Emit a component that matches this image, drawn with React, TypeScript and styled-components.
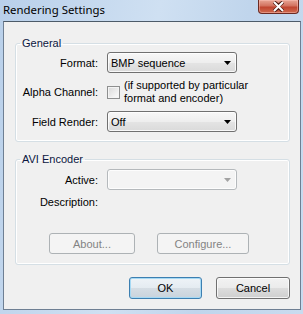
import React from "react";
import styled, { createGlobalStyle } from "styled-components";

const Global = createGlobalStyle`
  html, body { margin: 0; padding: 0; background: #c4d7ec; }
  * { box-sizing: border-box; }
`;

const body = `"Liberation Sans", Arial, sans-serif`;

const Window = styled.div`
  width: 303px;
  height: 314px;
  display: flex;
  flex-direction: column;
  background: linear-gradient(100deg, #b9d0ea 0%, #cfe0f2 45%, #c0d5ec 70%, #c9dbef 100%);
  overflow: hidden;
`;

const TitleBar = styled.div`
  height: 21px;
  flex: none;
  display: flex;
  justify-content: space-between;
  align-items: flex-start;
  padding-left: 3px;
`;

const Title = styled.div`
  font-family: "Noto Sans", sans-serif;
  font-size: 11.4px;
  line-height: 16px;
  margin-top: 2px;
  color: #000;
`;

const CloseButton = styled.div`
  width: 41px;
  height: 14px;
  margin-right: 4px;
  border: 1px solid #6b2a22;
  border-top: none;
  border-radius: 0 0 4px 4px;
  background: linear-gradient(#e8a595 0%, #d2725f 45%, #c04530 55%, #cf6a4e 100%);
  box-shadow: inset 0 0 0 1px rgba(255, 200, 190, 0.45);
  display: flex;
  align-items: center;
  justify-content: center;
`;

const Client = styled.div`
  flex: 1;
  margin: 0 2px 4px 3px;
  border: 1px solid #6e7f93;
  border-top-color: #4d5b69;
  background: #f0f0f0;
  display: flex;
  flex-direction: column;
  padding: 14px 10px 0 11px;
  font-family: ${body};
  font-size: 11px;
  color: #000;
`;

const Group = styled.fieldset<{ $gap?: number }>`
  margin: ${(p) => p.$gap ?? 0}px 0 0 0;
  padding: 0;
  min-width: 0;
  width: 275px;
  border: 1px solid #d5dfe5;
  border-radius: 3px;
  box-shadow: inset 0 0 0 1px #fff;
`;

const Legend = styled.legend`
  margin-left: 4px;
  padding: 0 2px;
  line-height: 14px;
  font-size: 11px;
  color: #0b1640;
`;

const Form = styled.div<{ $pt: number; $pb: number; $rowGap: number }>`
  display: grid;
  grid-template-columns: 82px 1fr;
  column-gap: 9px;
  row-gap: ${(p) => p.$rowGap}px;
  padding: ${(p) => p.$pt}px 0 ${(p) => p.$pb}px 0;
`;

const Label = styled.div`
  text-align: right;
  align-self: center;
  line-height: 14px;
  white-space: nowrap;
`;

const Combo = styled.div<{ $disabled?: boolean }>`
  width: 130px;
  height: 21px;
  border: 1px solid ${(p) => (p.$disabled ? "#b5b9bc" : "#707070")};
  border-radius: 3px;
  background: ${(p) =>
    p.$disabled
      ? "#f4f4f4"
      : "linear-gradient(#f7f7f7 0%, #eeeeee 50%, #e4e4e4 51%, #dadada 100%)"};
  box-shadow: inset 0 0 0 1px rgba(255, 255, 255, 0.8);
  display: flex;
  align-items: center;
  justify-content: space-between;
  padding: 0 5px 0 3px;
  white-space: nowrap;
`;

const CheckRow = styled.div`
  display: flex;
  align-items: center;
  gap: 4px;
  white-space: nowrap;
`;

const Check = styled.div`
  width: 13px;
  height: 13px;
  flex: none;
  border: 1px solid #8e8f8f;
  background: linear-gradient(135deg, #d8d8d8 0%, #f2f2f2 70%, #fbfbfb 100%);
  box-shadow: inset 0 0 0 1px #f4f4f4;
`;

const CheckText = styled.div`
  line-height: 13px;
`;

const ButtonRow = styled.div<{ $pl: number; $gap: number; $mt: number; $mb: number }>`
  display: flex;
  gap: ${(p) => p.$gap}px;
  padding-left: ${(p) => p.$pl}px;
  margin: ${(p) => p.$mt}px 0 ${(p) => p.$mb}px 0;
`;

const Button = styled.div<{ $w: number; $h: number; $disabled?: boolean; $default?: boolean }>`
  width: ${(p) => p.$w}px;
  height: ${(p) => p.$h}px;
  border: 1px solid
    ${(p) => (p.$disabled ? "#adb2b5" : p.$default ? "#3c7fb1" : "#707070")};
  border-radius: 3px;
  background: ${(p) =>
    p.$disabled
      ? "#f4f4f4"
      : p.$default
      ? "linear-gradient(#eef3f7 0%, #e4ebf1 50%, #d5dde4 51%, #c9d3dc 100%)"
      : "linear-gradient(#f2f2f2 0%, #ebebeb 50%, #dddddd 51%, #cfcfcf 100%)"};
  box-shadow: inset 0 0 0 1px
    ${(p) => (p.$disabled ? "#f4f4f4" : p.$default ? "#a6d9f4" : "rgba(255,255,255,0.75)")};
  color: ${(p) => (p.$disabled ? "#838383" : "#000")};
  display: flex;
  align-items: center;
  justify-content: center;
  line-height: 14px;
`;

const Footer = styled.div`
  margin-top: 12px;
  display: flex;
  justify-content: flex-end;
  gap: 14px;
`;

const Arrow = ({ color }: { color: string }) => (
  <svg width="7" height="4" viewBox="0 0 7 4">
    <polygon points="0,0 7,0 3.5,4" fill={color} />
  </svg>
);

const CloseGlyph = () => (
  <svg width="13" height="11" viewBox="0 0 13 11">
    <path
      d="M2 1 L6.5 4.6 L11 1 M2 10 L6.5 6.4 L11 10"
      stroke="#4a1810"
      strokeWidth="3.6"
      fill="none"
    />
    <path
      d="M2 1 L6.5 5.5 L11 1 M2 10 L6.5 5.5 L11 10"
      stroke="#ffffff"
      strokeWidth="2"
      fill="none"
    />
  </svg>
);

export default function App() {
  return (
    <>
      <Global />
      <Window>
        <TitleBar>
          <Title>Rendering Settings</Title>
          <CloseButton>
            <CloseGlyph />
          </CloseButton>
        </TitleBar>
        <Client>
          <Group>
            <Legend>General</Legend>
            <Form $pt={2} $pb={9} $rowGap={6}>
              <Label>Format:</Label>
              <Combo>
                <span>BMP sequence</span>
                <Arrow color="#000" />
              </Combo>
              <Label>Alpha Channel:</Label>
              <CheckRow>
                <Check />
                <CheckText>
                  (if supported by particular
                  <br />
                  format and encoder)
                </CheckText>
              </CheckRow>
              <Label>Field Render:</Label>
              <Combo>
                <span>Off</span>
                <Arrow color="#000" />
              </Combo>
            </Form>
          </Group>
          <Group $gap={10}>
            <Legend>AVI Encoder</Legend>
            <Form $pt={3} $pb={0} $rowGap={5}>
              <Label>Active:</Label>
              <Combo $disabled>
                <span />
                <Arrow color="#a3a3a3" />
              </Combo>
              <Label>Description:</Label>
              <div />
            </Form>
            <ButtonRow $pl={33} $gap={22} $mt={24} $mb={10}>
              <Button $w={86} $h={21} $disabled>
                About...
              </Button>
              <Button $w={92} $h={21} $disabled>
                Configure...
              </Button>
            </ButtonRow>
          </Group>
          <Footer>
            <Button $w={73} $h={22} $default>
              OK
            </Button>
            <Button $w={74} $h={22}>
              Cancel
            </Button>
          </Footer>
        </Client>
      </Window>
    </>
  );
}
